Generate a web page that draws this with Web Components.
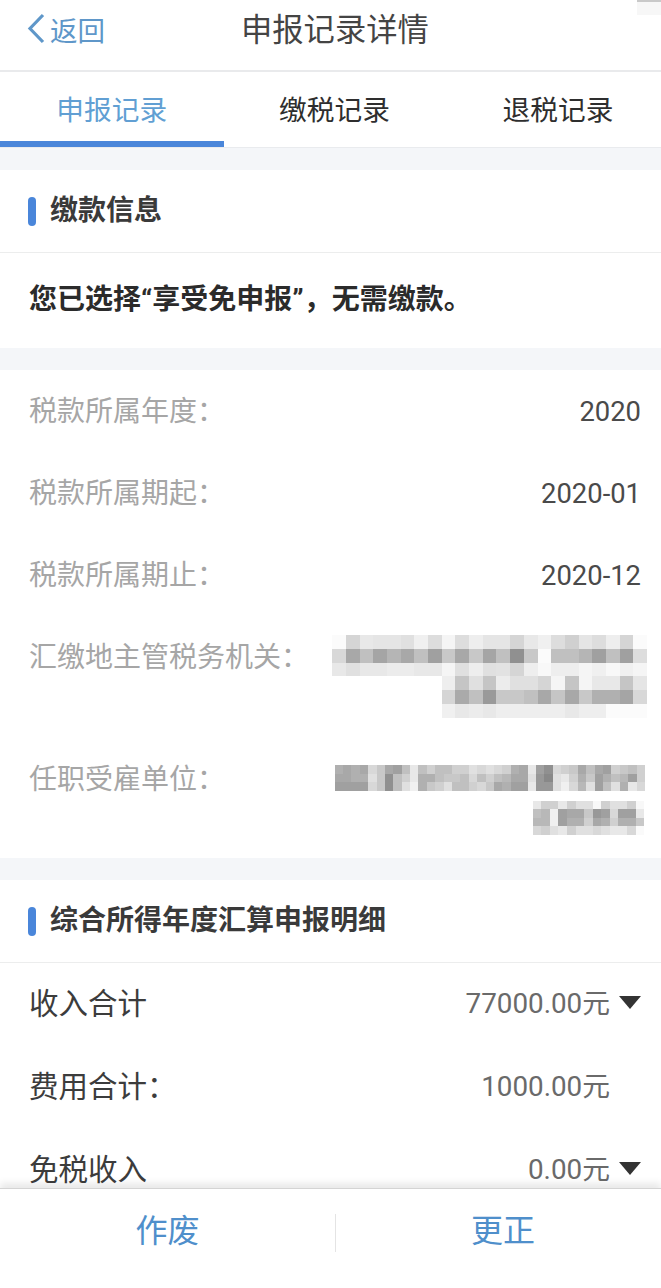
<!DOCTYPE html>
<html lang="zh-CN"><head><meta charset="utf-8"><title>申报记录详情</title>
<style>
html,body{margin:0;padding:0;background:#fff}
body{width:661px;height:1288px;overflow:hidden;font-family:Roboto,"Noto Sans CJK SC",sans-serif}
</style></head><body>
<app-page>
  <nav-header slot="head">申报记录详情</nav-header>
  <tab-bar slot="head"><tab-item active>申报记录</tab-item><tab-item>缴税记录</tab-item><tab-item>退税记录</tab-item></tab-bar>
  <page-card>
    <section-title>缴款信息</section-title>
    <notice-line>您已选择“享受免申报”，无需缴款。</notice-line>
  </page-card>
  <page-card>
    <info-row label="税款所属年度：">2020</info-row>
    <info-row label="税款所属期起：">2020-01</info-row>
    <info-row label="税款所属期止：">2020-12</info-row>
    <info-row label="汇缴地主管税务机关：" tall="4"><mosaic-block kind="a"></mosaic-block></info-row>
    <info-row label="任职受雇单位：" tall="5"><mosaic-block kind="b"></mosaic-block></info-row>
  </page-card>
  <page-card last>
    <section-title>综合所得年度汇算申报明细</section-title>
    <sum-row label="收入合计" arrow>77000.00元</sum-row>
    <sum-row label="费用合计：">1000.00元</sum-row>
    <sum-row label="免税收入" arrow>0.00元</sum-row>
  </page-card>
  <foot-bar slot="foot"><foot-action slot="p">作废</foot-action><foot-action slot="q">更正</foot-action></foot-bar>
</app-page>
<script>
const FONT='Roboto,"Noto Sans CJK SC",sans-serif';
function def(name,html,init){
  customElements.define(name,class extends HTMLElement{
    constructor(){super();this.attachShadow({mode:'open'}).innerHTML=html;}
    connectedCallback(){if(init)init(this,this.shadowRoot);}
  });
}
def('app-page',`<style>
:host{display:flex;flex-direction:column;width:661px;height:1288px;position:relative;overflow:hidden;background:#f4f6f9;font-family:${FONT}}
.main{flex:1;min-height:0;overflow:hidden;display:flex;flex-direction:column;gap:22px;padding-top:22px}
.corner{position:absolute;right:0;top:0;width:24px;height:15px;background:linear-gradient(#c9c9c9 0 2px,#f7f7f7 2px)}
</style><slot name="head"></slot><div class="main"><slot></slot></div><slot name="foot"></slot><div class="corner"></div>`);
def('nav-header',`<style>
:host{display:grid;grid-template-columns:211px auto 1fr;align-items:center;padding-bottom:13px;height:57px;background:#fff;border-bottom:2px solid #e9eaec}
.back{display:flex;align-items:center;gap:5px;padding-left:27px;color:#5f97c9;font-size:27.5px}
svg{display:block}
.t{font-size:31.3px;color:#444;padding:0 0 2px 30px}
</style><div class="back"><svg width="18" height="31" viewBox="0 0 18 31"><path d="M16 2 3 15.5 16 29" fill="none" stroke="#5f97c9" stroke-width="3.2"/></svg><span>返回</span></div><div class="t"><slot></slot></div><div></div>`);
def('tab-bar',`<style>
:host{display:grid;grid-template-columns:223.5px 222px 225px;height:75px;background:#fff;border-bottom:1px solid #e9ebee;overflow:hidden}
</style><slot></slot>`);
def('tab-item',`<style>
:host{display:flex;justify-content:center;padding-top:17px;height:58px;font-size:27.7px;line-height:44px;color:#2e2e2e;position:relative}
:host([active]){color:#619fd3}
:host([active])::after{content:"";position:absolute;left:0;right:0;bottom:0;height:6px;background:#4a86da}
</style><slot></slot>`);
def('page-card',`<style>
:host{display:block;background:#fff}
:host([last]){flex:1}
</style><slot></slot>`);
def('section-title',`<style>
:host{display:flex;align-items:center;gap:14px;height:76px;padding:0 0 6px 29px;border-bottom:1px solid #eceded;font-size:28px;font-weight:700;color:#3a3a3a}
i{width:8px;height:29px;border-radius:4px;background:#4a86da;margin:6px 0 0 -1px}
span{display:block}
</style><i></i><span><slot></slot></span>`);
def('notice-line',`<style>
:host{display:flex;align-items:center;height:95px;padding-left:29px;padding-bottom:7px;box-sizing:border-box;font-size:28px;font-weight:700;color:#2b2b2b;white-space:nowrap}
</style><slot></slot>`);
def('info-row',`<style>
:host{display:flex;justify-content:space-between;align-items:flex-start;height:82px;padding:0 20px 0 29px;font-size:28px;color:#a6a6a6;white-space:nowrap}
:host([tall="4"]){height:122px}
:host([tall="5"]){height:120px}
#l{line-height:84px}
.v{color:#4a4a4a;font-size:27.4px;line-height:84px}
</style><span id="l"></span><div class="v"><slot></slot></div>`,(h,s)=>{s.getElementById('l').textContent=h.getAttribute('label');});
def('sum-row',`<style>
:host{display:flex;justify-content:space-between;align-items:center;height:75px;padding:0 20px 8px 29px;font-size:29.5px;color:#3c3c3c;white-space:nowrap}
.r{display:flex;align-items:center;gap:9px;color:#6a6a6a;font-size:27.8px}
b{display:block;width:22px;height:13px;margin-top:4px}
svg{display:block}
</style><span id="l"></span><div class="r"><slot></slot><b id="a"></b></div>`,(h,s)=>{
  s.getElementById('l').textContent=h.getAttribute('label');
  if(h.hasAttribute('arrow'))s.getElementById('a').innerHTML='<svg width="22" height="13" viewBox="0 0 22 13"><path d="M0 0H22L11 13Z" fill="#333"/></svg>';
});
def('foot-bar',`<style>
:host{display:grid;grid-template-columns:335px 1px 334px;align-items:center;height:100px;background:#fff;border-top:1px solid #d4d4d4;box-sizing:border-box;box-shadow:0 -5px 7px rgba(0,0,0,.09);position:relative;padding-bottom:12px}
i{width:1px;height:38px;background:#e4e4e4}
</style><slot name="p"></slot><i></i><slot name="q"></slot>`);
def('foot-action',`<style>
:host{display:flex;justify-content:center;font-size:32px;color:#4f8fcb;padding-bottom:10px}
</style><slot></slot>`);
const S=s=>s.split(' ');
const M={
 a:{top:19,w:13.7,h:13.8,rows:[
  S('fb d5 e8 e5 e5 e0 f0 dd f5 dd ee e5 e5 d5 e8 f0 dd d0 e5 dd ee d5 fb'),
  S('d8 a8 c0 a5 b5 a8 c0 a0 c8 a8 c8 a5 c0 90 c8 fb c0 c0 b5 a0 c0 a0 dd'),
  S('e8 e0 e8 e8 ec ec e8 e8 f5 e0 ee e0 e2 d5 ee f8 ee ee f5 f0 f8 f0 f5'),
  ['','','','','','','','','ee','c5','e0','c5','ec','e0','e0','d5','f5','c5','f5','e8','e8','c5','e5'],
  ['','','','','','','','','d5','aa','c0','9a','c8','c8','c0','a8','c5','a8','c8','b0','b0','a5','d8'],
  ['','','','','','','','','f0','e8','ec','e8','ee','ee','ee','ee','ee','e8','ee','ee','fb','fb','fb']]},
 b:{top:27,w:8.4,h:8.5,rows:[
  S('b0 a8 b0 a8 d8 c8 a8 a0 c0 e8 c0 d0 c0 c0 d0 d0 e0 d8 e0 d8 d0 b0 a8 e8 a0 90 d8 d0 c8 a8 c0 a8 a0 d0 c8 c0 d0'),
  S('a8 a8 b0 b0 e0 c8 90 c0 d0 e8 b0 b0 c0 c8 c8 c0 d8 c0 d0 c0 b8 a8 a8 e0 98 88 e0 e8 d0 b0 c8 a0 b0 c0 b8 a0 d0'),
  S('a0 a0 a0 a0 d8 c8 90 c0 e0 f0 b0 c8 d0 e0 c0 c0 d0 d8 c8 a8 b0 a0 a0 e8 98 98 e0 f0 d8 b8 e0 a0 c0 e0 b0 e8 d8')],
  extra:{mt:10,ml:198,h:8.5,w:8.6,rows:[
  S('e8 d0 d0 e8 d0 e0 e0 f8 d0 e0 e0 d0 f8'),
  S('c0 b8 f0 a0 a8 a8 c8 98 a0 d8 a0 a0 e8'),
  S('b8 b8 f0 a0 b0 b0 d0 a8 b0 d0 b0 b0 c8'),
  S('d8 d0 e0 e8 d0 e0 e0 d8 e0 e8 e8 d8 fa')]}}
};
function grid(d){
  const cols=Math.max(...d.rows.map(r=>r.length));
  let out=`<div class="g" style="grid-template-columns:repeat(${cols},${d.w}px);grid-auto-rows:${d.h}px;${d.ml?`margin-left:${d.ml}px;`:''}${d.mt?`margin-top:${d.mt}px;`:''}">`;
  d.rows.forEach(r=>r.forEach(c=>{out+=c?`<span style="background:#${c}${c}${c}"></span>`:'<span></span>';}));
  return out+'</div>';
}
def('mosaic-block',`<style>
:host{display:block}
.g{display:grid;filter:blur(.7px)}
</style><div id="m"></div>`,(h,s)=>{
  const d=M[h.getAttribute('kind')];
  const m=s.getElementById('m');
  m.style.marginTop=d.top+'px';
  m.innerHTML=grid(d)+(d.extra?grid(d.extra):'');
  h.style.marginRight=h.getAttribute('kind')==='a'?'-6px':'-4px';
});
</script>
</body></html>
